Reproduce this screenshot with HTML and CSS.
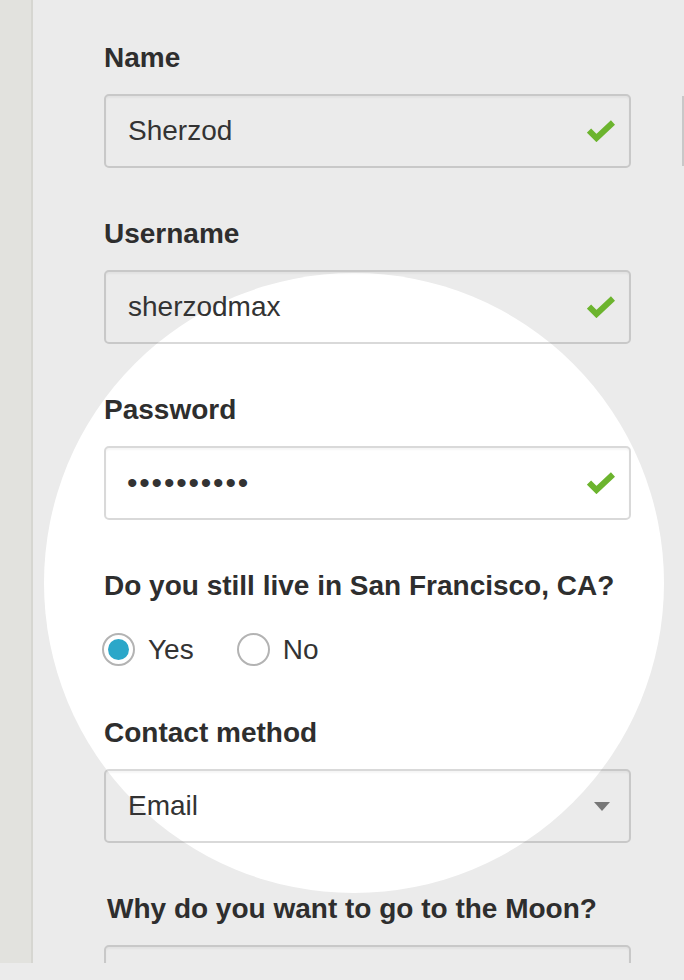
FILE: index.html
```html
<!DOCTYPE html>
<html lang="en">
<head>
<meta charset="utf-8">
<title>Form</title>
<link rel="stylesheet" href="styles.css">
</head>
<body>
<div class="page">
  <aside class="sidebar"></aside>
  <main class="main">
    <div class="spot"></div>
    <div class="edge"></div>
    <form class="form">
      <div class="field">
        <label class="label">Name</label>
        <div class="input">
          <span class="value">Sherzod</span>
          <svg class="check" width="28" height="22" viewBox="0 0 28 22"><polyline points="2,10.5 9.5,18 26,2.5" fill="none" stroke="#6cb42e" stroke-width="6"/></svg>
        </div>
      </div>
      <div class="field">
        <label class="label">Username</label>
        <div class="input">
          <span class="value">sherzodmax</span>
          <svg class="check" width="28" height="22" viewBox="0 0 28 22"><polyline points="2,10.5 9.5,18 26,2.5" fill="none" stroke="#6cb42e" stroke-width="6"/></svg>
        </div>
      </div>
      <div class="field">
        <label class="label">Password</label>
        <div class="input">
          <span class="value dots">••••••••••</span>
          <svg class="check" width="28" height="22" viewBox="0 0 28 22"><polyline points="2,10.5 9.5,18 26,2.5" fill="none" stroke="#6cb42e" stroke-width="6"/></svg>
        </div>
      </div>
      <div class="field radio-field">
        <label class="label">Do you still live in San Francisco, CA?</label>
        <div class="radios">
          <span class="radio-opt"><span class="radio checked"></span><span class="radio-text">Yes</span></span>
          <span class="radio-opt"><span class="radio"></span><span class="radio-text">No</span></span>
        </div>
      </div>
      <div class="field">
        <label class="label">Contact method</label>
        <div class="input select">
          <span class="value">Email</span>
          <svg class="arrow" width="16" height="9" viewBox="0 0 16 9"><polygon points="0,0 16,0 8,9" fill="#777"/></svg>
        </div>
      </div>
      <div class="field">
        <label class="label shifted">Why do you want to go to the Moon?</label>
        <div class="input tall"></div>
      </div>
    </form>
  </main>
</div>
</body>
</html>
```
FILE: styles.css
```css
html, body {
  margin: 0;
  padding: 0;
  background: #ebebeb;
}
body {
  font-family: "Liberation Sans", Arial, sans-serif;
  color: #333;
}
.page {
  display: flex;
  height: 963px;
  overflow: hidden;
}
.sidebar {
  width: 31px;
  flex: none;
  background: #e2e2de;
  border-right: 2px solid #d6d6d1;
}
.main {
  flex: 1;
  position: relative;
  overflow: hidden;
  padding: 42px 0 0 71px;
}
.spot {
  position: absolute;
  left: 11px;
  top: 273px;
  width: 620px;
  height: 620px;
  border-radius: 50%;
  background: #fff;
}
.edge {
  position: absolute;
  right: 0;
  top: 96px;
  width: 2px;
  height: 70px;
  background: #c8c8c8;
}
.form {
  position: relative;
  width: 527px;
}
.field {
  margin-bottom: 50px;
}
.label {
  display: block;
  font-size: 28px;
  font-weight: bold;
  line-height: 32px;
  margin-bottom: 20px;
  white-space: nowrap;
  color: #2e2e2e;
}
.label.shifted {
  padding-left: 3px;
}
.input {
  box-sizing: border-box;
  height: 74px;
  border: 2px solid rgba(0, 0, 0, 0.15);
  border-radius: 5px;
  box-shadow: inset 0 2px 2px rgba(0, 0, 0, 0.04);
  display: flex;
  align-items: center;
  padding: 0 14px 0 22px;
  font-size: 28px;
}
.value {
  flex: 1;
  line-height: 32px;
}
.dots {
  letter-spacing: 1.8px;
  font-size: 30px;
  margin-left: -1px;
}
.check {
  display: block;
  margin-right: 0;
}
.arrow {
  display: block;
  margin-right: 5px;
}
.radio-field {
  margin-bottom: 51px;
}
.radio-field .label {
  margin-bottom: 31px;
}
.radios {
  display: flex;
  align-items: center;
  height: 33px;
  gap: 45px;
}
.radio-opt {
  display: flex;
  align-items: center;
  gap: 13px;
  font-size: 28px;
  line-height: 32px;
}
.radio {
  box-sizing: border-box;
  width: 33px;
  height: 33px;
  border-radius: 50%;
  border: 2px solid #b3b3b3;
  background: #fff;
  display: flex;
  align-items: center;
  justify-content: center;
  margin-left: -2px;
}
.radio.checked::after {
  content: "";
  width: 21px;
  height: 21px;
  border-radius: 50%;
  background: #2ba7c9;
}
.tall {
  height: 120px;
}
```
